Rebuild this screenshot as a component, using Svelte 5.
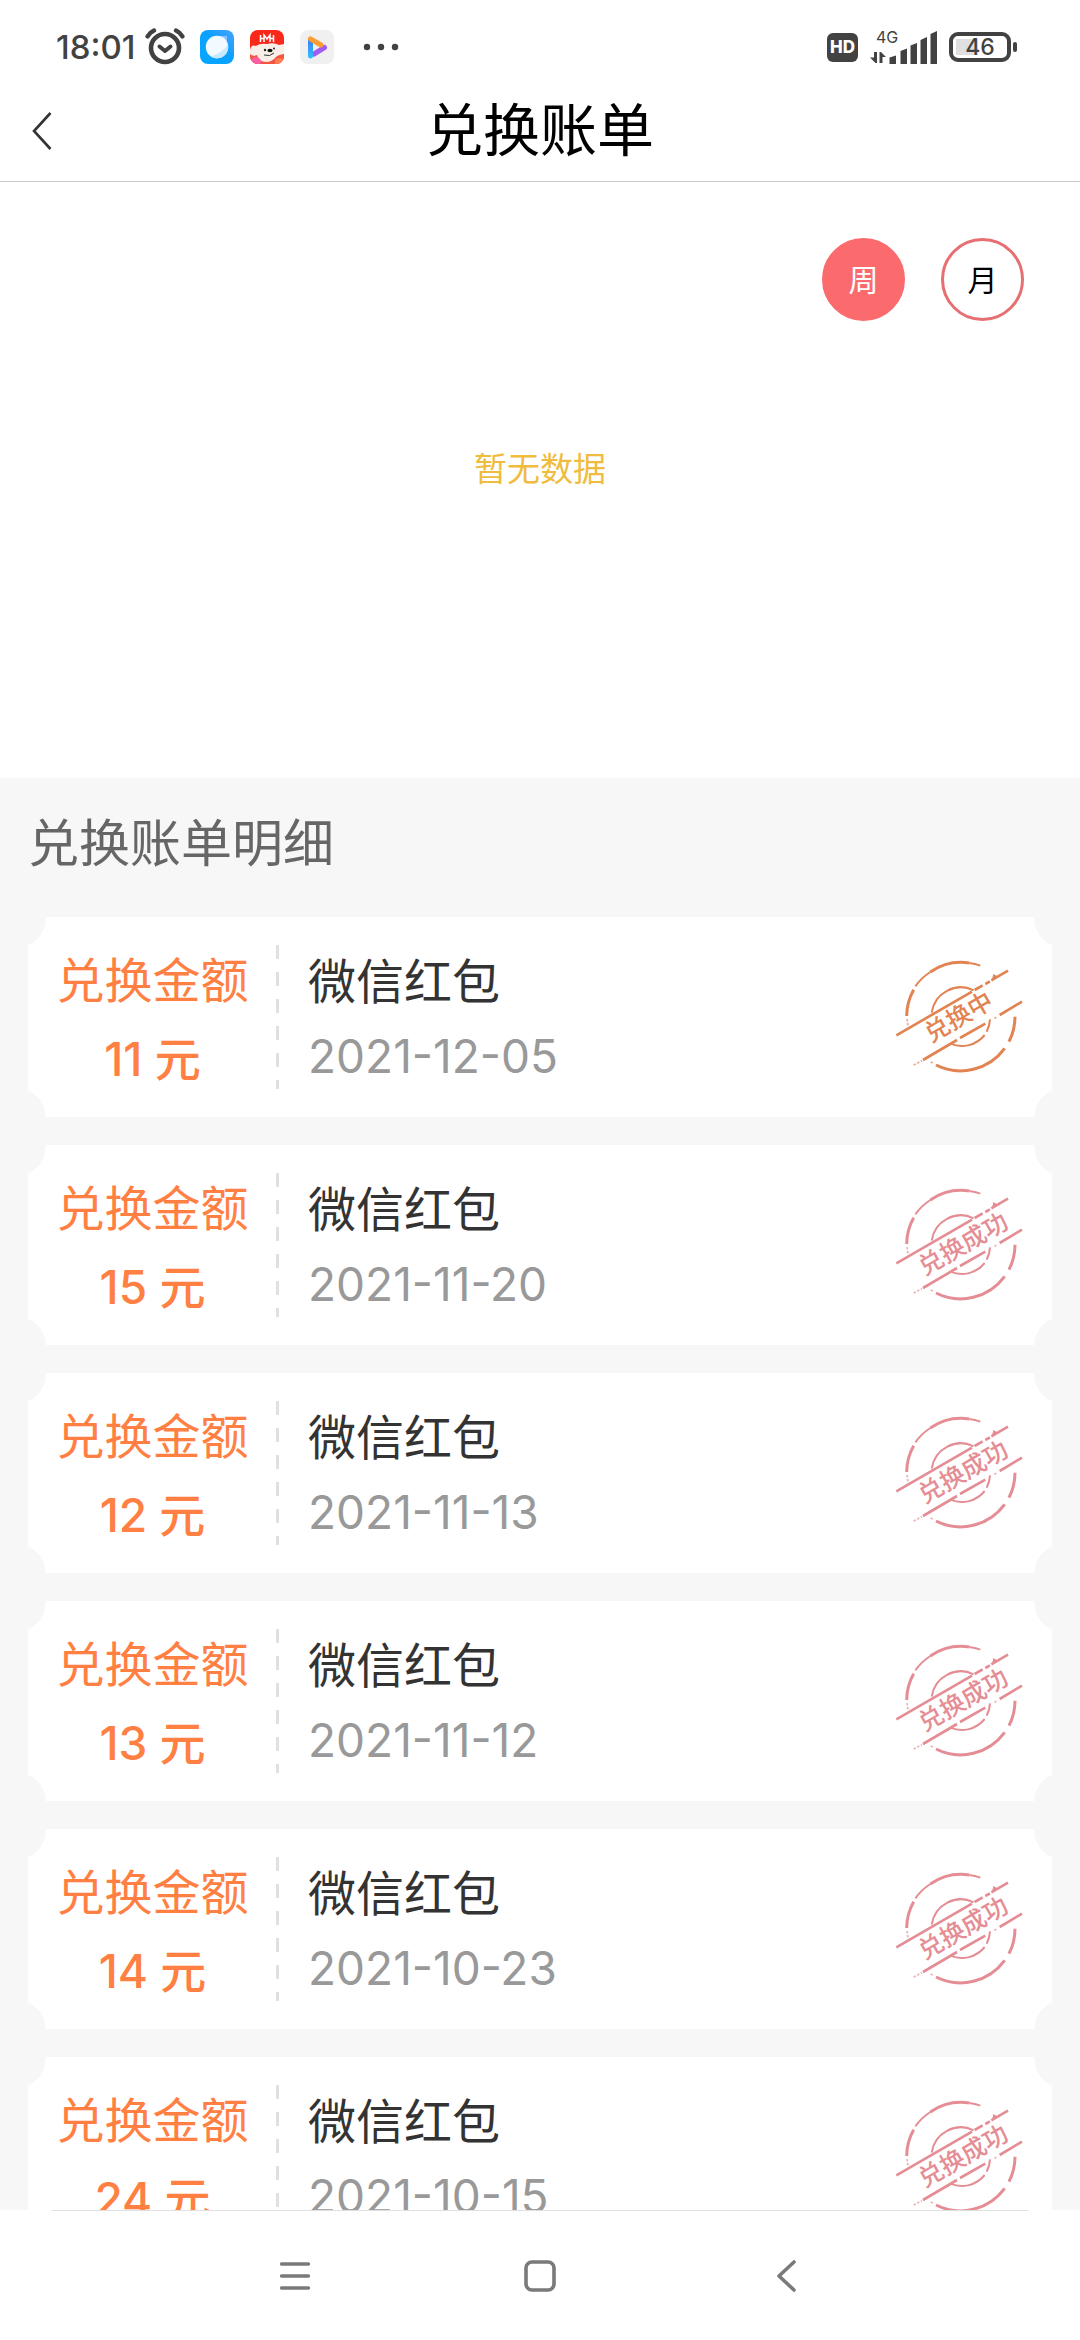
<script>
    let period = $state("week");

    const periods = [
        { id: "week", label: "周" },
        { id: "month", label: "月" },
    ];

    const bills = [
        { amount: 11, name: "微信红包", date: "2021-12-05", done: false },
        { amount: 15, name: "微信红包", date: "2021-11-20", done: true },
        { amount: 12, name: "微信红包", date: "2021-11-13", done: true },
        { amount: 13, name: "微信红包", date: "2021-11-12", done: true },
        { amount: 14, name: "微信红包", date: "2021-10-23", done: true },
        { amount: 24, name: "微信红包", date: "2021-10-15", done: true },
    ];
</script>

<div class="screen">
    <div class="status">
        <span class="time">18:01</span>
        <svg class="alarm" width="40" height="40" viewBox="0 0 40 40" fill="none" stroke="#424242" stroke-linecap="round">
            <circle cx="20" cy="21" r="14" stroke-width="4.6" />
            <path d="M2.6 9.4Q5 5.4 9 3.6M37.4 9.4Q35 5.4 31 3.6" stroke-width="4.4" />
            <path d="M14.5 19.5L20 24L25.5 19.5" stroke-width="4" stroke-linejoin="round" />
        </svg>
        <div class="apps">
            <svg width="34" height="34" viewBox="0 0 34 34">
                <defs>
                    <linearGradient id="sky" x1="1" y1="0" x2="0" y2="1">
                        <stop offset="0" stop-color="#4aa3fb" />
                        <stop offset="0.45" stop-color="#0ba0ff" />
                        <stop offset="1" stop-color="#05a8ff" />
                    </linearGradient>
                </defs>
                <rect width="34" height="34" rx="8" fill="url(#sky)" />
                <path d="M20 6h7v9z" fill="#8cc5fc" />
                <circle cx="17" cy="17" r="11.2" fill="#f1faff" />
                <path d="M28 15A11.2 11.2 0 0 1 11 26.5Q22 23 28 15z" fill="#c9e7fd" />
            </svg>
            <svg width="34" height="34" viewBox="0 0 34 34">
                <defs>
                    <clipPath id="tile"><rect width="34" height="34" rx="8" /></clipPath>
                </defs>
                <g clip-path="url(#tile)">
                    <rect width="34" height="34" fill="#f9281b" />
                    <path d="M10.5 12V5M10.5 8.5H14M14 12V5L17 9L20 5V12M20 8.5H23.5M23.5 12V5" fill="none" stroke="#fff" stroke-width="1.5" />
                    <rect y="24" width="34" height="10" fill="#f5553f" />
                    <path d="M0 20Q1 14 6 16Q10 13 17 14Q24 12 29 15L34 14V24Q28 25 26 27Q22 32 16 32Q9 32 7 25Q3 27 0 24z" fill="#f8efe9" />
                    <circle cx="6" cy="32" r="5" fill="#fb5fa0" />
                    <circle cx="29" cy="32" r="4" fill="#ff8052" />
                    <circle cx="15" cy="20" r="1.2" fill="#222" />
                    <circle cx="24" cy="18.5" r="1" fill="#222" />
                    <ellipse cx="20" cy="20.5" rx="2.6" ry="1.7" fill="#111" />
                    <path d="M14 25Q20 27 24 23" fill="none" stroke="#333" />
                </g>
            </svg>
            <svg width="34" height="34" viewBox="0 0 34 34">
                <defs>
                    <linearGradient id="blue" gradientUnits="userSpaceOnUse" x1="0" y1="8" x2="0" y2="28">
                        <stop offset="0" stop-color="#3f7bf6" />
                        <stop offset="1" stop-color="#2fc0fb" />
                    </linearGradient>
                </defs>
                <rect width="34" height="34" rx="8" fill="#f0f0f1" />
                <g fill="none" stroke-linecap="round" stroke-width="5">
                    <path d="M14 24L24.5 17.5" stroke="#a35cf0" />
                    <path d="M10.5 10V26" stroke="url(#blue)" />
                    <path d="M10.5 8.8L21 15" stroke="#fb9d33" />
                </g>
            </svg>
        </div>
        <svg class="more" width="36" height="8" viewBox="0 0 36 8" fill="#424242">
            <circle cx="4" cy="4" r="3.2" />
            <circle cx="18" cy="4" r="3.2" />
            <circle cx="32" cy="4" r="3.2" />
        </svg>

        <div class="signals">
            <span class="hd">HD</span>
            <div class="network">
                <span class="net-label">4G</span>
                <svg width="67" height="34" viewBox="0 0 67 34" fill="#424242">
                    <path d="M4 22h3v11H5.5L0 27.5h4zM9.500 33V22H11l5 5h-3.500v6z" />
                    <path d="M19.5 27.5L26 25.5V34h-6.5zM30.5 21L37 18.5V34h-6.5zM40.5 15.5L47 13V34h-6.5zM50.5 10L57 7V34h-6.5zM60.5 4L67 1V34h-6.5z" />
                </svg>
            </div>
            <div class="battery"><span>46</span></div>
        </div>
    </div>

    <header>
        <button class="back" aria-label="返回">
            <svg width="20" height="38" viewBox="0 0 20 38" fill="none" stroke="#333" stroke-width="2.6">
                <path d="M18.5 1L2 19L18.5 37" />
            </svg>
        </button>
        <h1>兑换账单</h1>
    </header>

    <section class="chart">
        <div class="periods">
            {#each periods as p}
                <button class="period" class:active={period === p.id} onclick={() => (period = p.id)}>{p.label}</button>
            {/each}
        </div>
        <p class="empty">暂无数据</p>
    </section>

    <main>
        <h2>兑换账单明细</h2>
        <ul>
            {#each bills as bill}
                <li class="card">
                    <div class="amount">
                        <span>兑换金额</span>
                        <span class="sum">{bill.amount} 元</span>
                    </div>
                    <div class="info">
                        <span class="name">{bill.name}</span>
                        <span class="date">{bill.date}</span>
                    </div>
                    <svg class="stamp" class:done={bill.done} width="130" height="120" viewBox="96 168 390 360">
                        <g fill="none" stroke="currentColor">
                            <path stroke-width="9" d="M134 345A164 164 0 0 1 155 266M205 213A164 164 0 0 1 322 186M459 347A164 164 0 0 1 441 422M428 442A164 164 0 0 1 222 492" />
                            <path stroke-width="6" d="M160 256A164 164 0 0 1 205 213M322 186A164 164 0 0 1 355 194M209 335A88 88 0 0 1 335 268M384 355A88 88 0 0 1 374 392M368 402A88 88 0 0 1 265 428" />
                            <path stroke-width="8" d="M103 403L330 272M338 267L362 253M370 249L384 241M388 238L438 209M183 477L285 417M294 411L370 368M413 342L480 302" />
                            <path stroke-width="5" stroke-dasharray="7 5" opacity="0.7" d="M155 492L180 479M135 354L138 374M206 483L216 488M397 352L405 348" />
                        </g>
                        <path d="M394 219L410 228L390 236z" fill="currentColor" />
                        <text
                            x={bill.done ? 303 : 290}
                            y={bill.done ? 344 : 347}
                            transform="rotate(-30 {bill.done ? 303 : 290} {bill.done ? 344 : 347})"
                            dy="27"
                            text-anchor="middle"
                            fill="currentColor">{bill.done ? "兑换成功" : "兑换中"}</text
                        >
                    </svg>
                </li>
            {/each}
        </ul>
    </main>

    <nav>
        <button aria-label="菜单">
            <svg width="32" height="32" viewBox="0 0 32 32" stroke="#7a7a7a" stroke-width="3.4" stroke-linecap="round">
                <path d="M2.5 4H29.5M2.5 16H29.5M2.5 28H29.5" />
            </svg>
        </button>
        <button aria-label="主页">
            <svg width="32" height="32" viewBox="0 0 32 32" fill="none" stroke="#7a7a7a" stroke-width="3.6">
                <rect x="2" y="2" width="28" height="28" rx="6" />
            </svg>
        </button>
        <button aria-label="后退">
            <svg width="32" height="32" viewBox="0 0 32 32" fill="none" stroke="#7a7a7a" stroke-width="3.6" stroke-linecap="round" stroke-linejoin="round">
                <path d="M25 2L10 16L25 30" />
            </svg>
        </button>
    </nav>
</div>

<style>
    :global(body) {
        margin: 0;
        background: #fff;
    }

    .screen {
        display: flex;
        flex-direction: column;
        height: 100vh;
        overflow: hidden;
        font-family: Inter, "Noto Sans CJK SC", sans-serif;
        color: #333;
    }

    button {
        border: 0;
        padding: 0;
        background: none;
        font: inherit;
        color: inherit;
    }

    svg {
        display: block;
        flex: none;
    }

    h1,
    h2,
    p,
    ul {
        margin: 0;
        padding: 0;
        font-weight: 400;
    }

    .status {
        flex: none;
        display: flex;
        align-items: center;
        height: 66px;
        padding: 14px 63px 0 56px;
        color: #424242;
    }

    .time {
        width: 89px;
        font-size: 33px;
        font-weight: 500;
        line-height: 40px;
    }

    .apps {
        display: flex;
        gap: 16px;
        margin-left: 15px;
    }

    .more {
        margin-left: 29px;
    }

    .signals {
        display: flex;
        align-items: center;
        gap: 12px;
        margin-left: auto;
    }

    .hd {
        width: 31px;
        border-radius: 6px;
        background: #424242;
        color: #fff;
        font-size: 17px;
        font-weight: 800;
        line-height: 29px;
        text-align: center;
    }

    .network {
        position: relative;
    }

    .net-label {
        position: absolute;
        left: 6px;
        top: -3px;
        font-size: 16px;
        line-height: 20px;
    }

    .battery {
        position: relative;
        box-sizing: border-box;
        width: 62px;
        height: 30px;
        margin-right: 6px;
        border: 4px solid #424242;
        border-radius: 9px;
        background: linear-gradient(#e0e0e0, #e0e0e0) 3px 3px / 22px 16px no-repeat;
        font-size: 23px;
        font-weight: 500;
        line-height: 23px;
        text-align: center;
    }

    .battery::after {
        content: "";
        position: absolute;
        right: -10px;
        top: 6px;
        width: 4px;
        height: 10px;
        border-radius: 2px;
        background: #424242;
    }

    header {
        flex: none;
        display: grid;
        grid-template-columns: 88px 1fr 88px;
        align-items: center;
        height: 101px;
        border-bottom: 1px solid #ccc;
    }

    .back {
        padding-left: 32px;
    }

    h1 {
        color: #000;
        font-size: 57px;
        line-height: 80px;
        text-align: center;
    }

    .chart {
        flex: none;
        padding: 56px 56px 285px;
    }

    .periods {
        display: flex;
        justify-content: flex-end;
        gap: 36px;
    }

    .period {
        width: 83px;
        height: 83px;
        border: 3px solid #e76f72;
        border-radius: 50%;
        color: #000;
        font-size: 30px;
        line-height: 30px;
    }

    .period.active {
        border-color: #fb6b6e;
        background: #fb6b6e;
        color: #fff;
    }

    .empty {
        margin-top: 124px;
        color: #efbc3d;
        font-size: 33px;
        line-height: 48px;
        text-align: center;
    }

    main {
        flex: 1;
        min-height: 0;
        overflow: hidden;
        padding: 0 28px;
        background: #f7f7f7;
    }

    h2 {
        padding: 30px 0 37px;
        color: #666;
        font-size: 51px;
        line-height: 72px;
    }

    ul {
        display: flex;
        flex-direction: column;
        gap: 28px;
        list-style: none;
    }

    /* ticket: a round bite out of each corner */
    .card {
        display: flex;
        align-items: center;
        box-sizing: border-box;
        height: 200px;
        padding: 0 28px;
        background:
            radial-gradient(circle at -11px 2px, #f7f7f7 28px, #fff 29px) left top / 50% 50% no-repeat,
            radial-gradient(circle at calc(100% + 11px) 2px, #f7f7f7 28px, #fff 29px) right top / 50% 50% no-repeat,
            radial-gradient(circle at -11px 100%, #f7f7f7 28px, #fff 29px) left bottom / 50% 50% no-repeat,
            radial-gradient(circle at calc(100% + 11px) 100%, #f7f7f7 28px, #fff 29px) right bottom / 50% 50% no-repeat;
    }

    .amount,
    .info {
        display: flex;
        flex-direction: column;
        font-size: 48px;
        line-height: 72px;
    }

    .amount {
        box-sizing: border-box;
        gap: 6px;
        width: 223px;
        height: 144px;
        padding-right: 30px;
        background: repeating-linear-gradient(#e0e0e0 0 14px, transparent 14px 27px) right top / 3px 100% no-repeat;
        color: #ff8042;
        text-align: center;
        white-space: nowrap;
    }

    .sum {
        font-size: 46px;
        font-weight: 500;
    }

    .info {
        flex: 1;
        gap: 2px;
        padding: 4px 0 0 29px;
    }

    .date {
        color: #999;
        font-size: 46px;
    }

    .stamp {
        color: #e28352;
    }

    .stamp.done {
        color: #e58d94;
    }

    .stamp text {
        font-size: 74px;
        font-weight: 500;
    }

    nav {
        flex: none;
        display: flex;
        justify-content: center;
        gap: 197px;
        height: 129px;
        margin: 0 52px;
        border-top: 1px solid #e0e0e0;
    }

    nav button {
        width: 48px;
        padding: 0 8px;
    }
</style>
